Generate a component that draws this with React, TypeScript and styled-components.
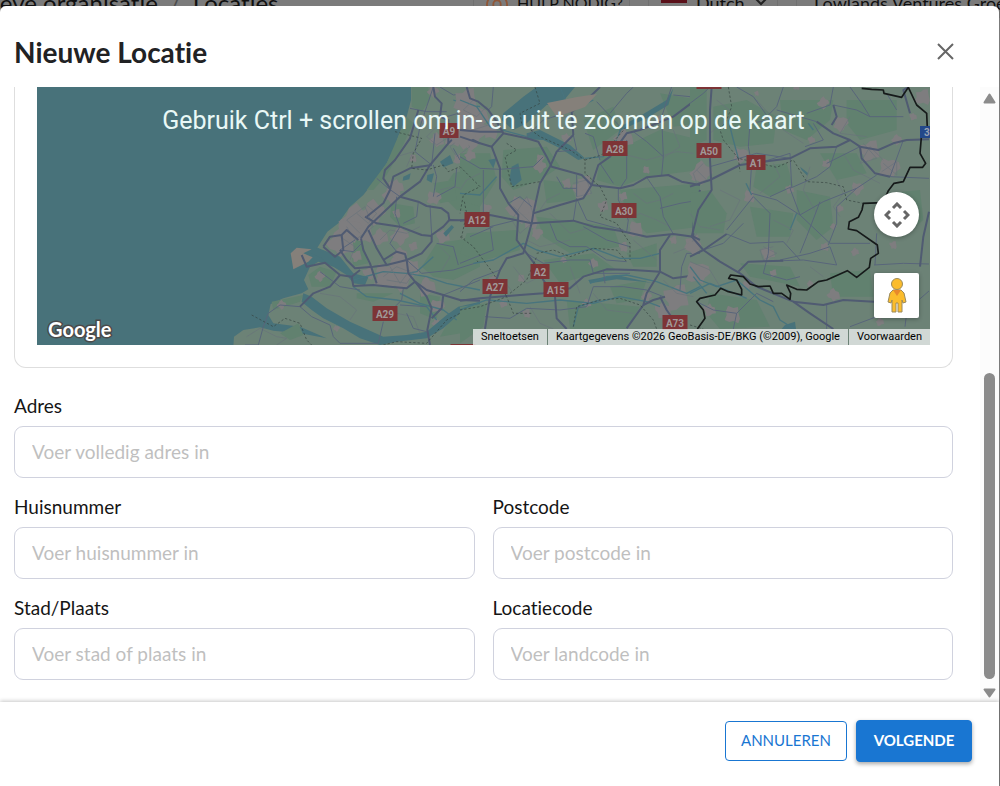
import React, { useId } from "react";
import styled, { createGlobalStyle, css } from "styled-components";

const GlobalStyle = createGlobalStyle`
  *, *::before, *::after { box-sizing: border-box; }
  html, body { margin: 0; background: #7b7b7b; }
  body {
    font-family: Lato, "Liberation Sans", sans-serif;
    font-variant-ligatures: none;
    color: #1a1a1c;
    overflow: hidden;
  }
`;

const Page = styled.div`
  min-height: 100vh;
  display: flex;
  flex-direction: column;
  overflow: hidden;
`;

const TopBar = styled.header`
  display: flex;
  align-items: center;
  gap: 18px;
  height: 30px;
  margin: -12px 0;
  font-size: 18px;
  line-height: 30px;
  white-space: nowrap;
  color: #101010;
`;

const Crumbs = styled.nav`
  display: flex;
  gap: 12px;
  flex: 1;
  margin-left: -6px;
  font-size: 24px;
`;

const Crumb = styled.span<{ $muted?: boolean }>`
  color: ${(p) => (p.$muted ? "#4c4c4c" : "#101010")};
`;

const BarGroup = styled.div<{ $width: number; $small?: boolean }>`
  display: flex;
  align-items: center;
  gap: 9px;
  flex: none;
  width: ${(p) => p.$width}px;
  padding-left: ${(p) => (p.$width > 200 ? 17 : 12)}px;
  font-size: ${(p) => (p.$small ? 16 : 18)}px;
  border: solid #707070;
  border-width: 0 1px;
`;

const Flag = styled.span`
  width: 26px;
  height: 17px;
  margin-bottom: 18px;
  background: linear-gradient(#7a7a7a 50%, #5a1019 50%);
`;

const Dialog = styled.section`
  position: relative;
  flex: 1;
  display: flex;
  flex-direction: column;
  margin-right: 1px;
  background: #fff;
  border-radius: 6px 6px 0 0;
`;

const DialogHeader = styled.div`
  display: flex;
  align-items: center;
  justify-content: space-between;
  height: 81px;
  padding: 10px 40px 0 14px;
`;

const Title = styled.h1`
  margin: 0;
  font-size: 28px;
  line-height: 36px;
  font-weight: 700;
  color: #212224;
`;

const CloseButton = styled.button`
  display: flex;
  padding: 4px;
  border: 0;
  background: none;
  color: #666;
`;

const Body = styled.div`
  flex: 1;
  display: flex;
`;

const Content = styled.form`
  flex: 1;
  min-width: 0;
  padding: 0 27px 20px 14px;
`;

const MapCard = styled.div`
  padding: 0 22px 22px;
  border: 1px solid #dedede;
  border-top: 0;
  border-radius: 0 0 12px 12px;
  margin-bottom: 26px;
`;

const MapBox = styled.div`
  position: relative;
  height: 258px;
  overflow: hidden;
  background: #48727a;
  font-family: Roboto, "Liberation Sans", sans-serif;
`;

const MapDrawing = styled.svg`
  display: block;
  width: 100%;
  height: 100%;
`;

const MapHint = styled.p`
  position: absolute;
  inset: 19px 0 auto;
  margin: 0;
  text-align: center;
  font-size: 25px;
  line-height: 30px;
  color: #e9f8f6;
`;

const MapControls = styled.div`
  position: absolute;
  right: 11px;
  bottom: 27px;
  display: flex;
  flex-direction: column;
  gap: 36px;
`;

const MapButton = styled.button<{ $round?: boolean }>`
  display: grid;
  place-items: center;
  width: 45px;
  height: 45px;
  padding: 0;
  border: 0;
  background: #fff;
  border-radius: ${(p) => (p.$round ? "50%" : "2px")};
  box-shadow: 0 1px 4px rgba(0, 0, 0, 0.3);
`;

const Brand = styled.a`
  position: absolute;
  left: 11px;
  bottom: 3px;
  font-family: Lato, sans-serif;
  font-size: 20px;
  line-height: 26px;
  font-weight: 700;
  color: #fff;
  text-decoration: none;
  -webkit-text-stroke: 3px #4a4a4a;
  paint-order: stroke fill;
`;

const Legal = styled.div`
  position: absolute;
  right: 0;
  bottom: 0;
  display: flex;
  gap: 1px;
  height: 16px;
  font-size: 11px;
  line-height: 16px;
  color: #000;
`;

const legalItem = css`
  padding: 0 8px;
  font: inherit;
  color: inherit;
  border: 0;
  text-decoration: none;
  white-space: nowrap;
  background: rgba(235, 238, 237, 0.8);
`;
const LegalButton = styled.button`${legalItem}`;
const LegalText = styled.span`${legalItem}`;
const LegalLink = styled.a`${legalItem}`;

const Fields = styled.div`
  display: grid;
  grid-template-columns: 1fr 1fr;
  gap: 17px 18px;
`;

const FieldBox = styled.div<{ $wide?: boolean }>`
  display: flex;
  flex-direction: column;
  gap: 8px;
  grid-column: ${(p) => (p.$wide ? "1 / -1" : "auto")};
`;

const Label = styled.label`
  font-size: 19px;
  line-height: 24px;
  color: #151515;
`;

const TextInput = styled.input`
  width: 100%;
  height: 52px;
  padding: 0 17px 2px;
  border: 1px solid #d0d2de;
  border-radius: 9px;
  background: #fff;
  font-family: inherit;
  font-size: 19px;
  color: #151515;
  outline: 0;
  &::placeholder { color: #bfbfbf; opacity: 1; }
`;

const ScrollTrack = styled.div`
  display: flex;
  flex-direction: column;
  align-items: center;
  width: 19px;
  padding: 6px 0 4px;
  background: #fcfcfc;
`;

const ScrollThumb = styled.div`
  flex: 305;
  width: 11px;
  margin-bottom: 9px;
  border-radius: 6px;
  background: #8b8b8b;
`;

const ScrollGap = styled.div`
  flex: 269;
`;

const Footer = styled.footer`
  position: relative;
  display: flex;
  align-items: flex-start;
  justify-content: flex-end;
  gap: 9px;
  height: 84px;
  padding: 18px 27px 0;
  background: #fff;
  box-shadow: 0 -1px 4px rgba(0, 0, 0, 0.22);
`;

const ActionButton = styled.button<{ $primary?: boolean }>`
  height: ${(p) => (p.$primary ? 42 : 40)}px;
  margin-top: ${(p) => (p.$primary ? 0 : 1)}px;
  width: ${(p) => (p.$primary ? 116 : 122)}px;
  padding: 0 0 2px;
  border: 1px solid #1976d2;
  border-radius: 4px;
  background: ${(p) => (p.$primary ? "#1976d2" : "#fff")};
  color: ${(p) => (p.$primary ? "#fff" : "#1976d2")};
  font-family: inherit;
  font-size: 15px;
  font-weight: ${(p) => (p.$primary ? 700 : 400)};
  text-transform: uppercase;
  box-shadow: ${(p) => (p.$primary ? "0 2px 4px rgba(0, 0, 0, 0.35)" : "none")};
`;

/* Each map tile is 240 wide and drawn at three units per pixel. */
type Tile = {
  x: number;
  forest: string[];
  water: string[];
  rivers: string[];
  towns: [number, number, number][];
  major: string[];
  minor: string[];
  lanes: string[];
  trails: string[];
};

const west: Tile = {
  x: 203,
  forest: [
    "515,21 565,21 570,60 545,95 515,80",
    "500,110 520,130 480,215 440,285 400,330 380,330 440,250",
    "640,280 720,260 720,400 650,390 600,340",
    "455,370 520,380 525,430 480,440 450,410",
    "590,490 720,470 720,560 640,600 580,590 545,560",
    "330,480 365,480 385,550 340,560",
    "205,585 240,560 290,575 270,620 215,620",
    "580,310 640,300 650,360 600,370",
    "540,640 600,650 590,720 540,700",
    "640,700 720,680 720,750 600,770",
    "95,665 190,645 180,665 100,690",
    "120,760 175,730 190,765 150,780",
    "350,640 460,640 400,665 350,655",
  ],
  water: [
    "190,640 215,650 260,685 330,725 385,750 430,770 500,765 560,755 620,705 655,680 720,665 720,690 660,700 610,745 560,775 470,785 420,795 360,775 310,745 250,715 215,690 185,665",
    "232,503 300,530 340,580 385,592 375,615 340,610 320,585 280,560 245,535 215,520",
    "600,245 630,225 640,250 610,262",
    "490,290 512,280 508,298 488,302",
    "562,285 582,280 575,308 560,300",
    "610,460 635,435 642,442 618,470",
  ],
  rivers: [
    "340,600 430,575 500,580 560,590 620,610 720,630",
    "340,620 380,650 470,660 560,680 590,720",
    "640,60 680,75 720,80",
    "500,580 530,575 580,530",
    "480,640 540,670 610,690 650,720",
  ],
  towns: [
    [350, 425, 50], [300, 490, 42], [400, 400, 38], [455, 345, 28], [470, 320, 24], [580, 355, 22], [590, 180, 22],
    [325, 455, 40], [375, 460, 30],
    [640, 175, 28], [690, 120, 50], [690, 160, 50], [660, 235, 20], [480, 580, 55], [440, 590, 42], [385, 580, 20], [520, 565, 26],
    [610, 470, 22], [480, 470, 28], [420, 470, 26], [560, 620, 30], [590, 680, 22], [125, 675, 14], [240, 590, 16], [350, 530, 18],
    [580, 35, 18], [520, 235, 13], [480, 525, 22], [520, 500, 15], [290, 745, 10], [590, 730, 15], [470, 400, 14], [550, 120, 10],
  ],
  major: [
    "363,475 385,440 480,350 540,305 570,255 625,190 660,155 720,105",
    "380,410 430,370 450,330 460,290 510,265 575,255",
    "450,325 430,295 435,270 465,240 510,175 535,90",
    "375,410 410,430 480,440 545,465 575,468",
    "385,450 410,505 440,555",
    "363,475 370,510 390,550 410,610",
    "300,510 320,540 345,565 400,560 440,555 500,540 545,520 575,485 575,465 610,440 628,420 720,422",
    "628,420 625,400 605,385 560,378 535,365 480,350",
    "185,525 200,560 255,548 300,585 335,590 360,570",
    "335,590 340,618 400,615 450,620 500,625 525,605 505,580 500,540 495,522 470,515 430,540",
    "525,605 560,650 575,685 562,750 570,795",
    "525,605 560,630 610,645 660,660 720,662",
    "610,645 605,685 575,715",
    "300,585 270,620 220,640 180,680",
    "250,500 270,470 305,465 320,450 355,480",
    "250,500 285,530 310,510 305,465",
    "580,21 585,50 605,70 600,110 625,120 625,190",
    "600,150 660,155 690,175 720,190",
  ],
  minor: [
    "180,680 120,675 85,700 70,740 55,795 15,795",
    "180,680 215,710 270,735 280,770 300,790 415,790 430,725",
    "490,625 485,660 465,680 430,700",
    "580,21 560,80 540,140 525,215 575,255 585,160",
    "510,85 560,95 620,95",
    "410,295 445,325 480,350",
    "470,350 465,400 480,440 450,490 470,515",
    "535,365 530,410 490,430",
    "570,375 575,465",
    "500,540 545,580 640,570 720,545",
    "590,490 640,500 655,555",
    "580,255 590,290 580,350",
    "650,265 645,320 590,350",
    "240,575 300,620 360,630",
    "345,480 300,510 340,515 365,490",
    "680,21 700,50 690,90 620,110",
    "600,21 640,45 680,40",
    "610,645 720,600",
    "640,205 660,240 720,265",
    "480,675 560,680",
    "560,755 520,745 500,700",
  ],
  lanes: [
    "320,440 345,480 400,440 375,380 320,420 360,460",
    "300,470 345,500 330,540",
    "420,480 450,450 500,460 540,440",
    "430,590 470,560 520,580 500,610 440,600",
    "450,560 480,610 510,570",
    "500,260 520,215 470,230 450,260",
    "600,330 640,320 690,330",
    "240,640 300,650 350,690 330,720",
    "20,770 60,745 110,770 140,775 110,795",
    "600,500 630,530 600,580",
    "590,140 560,170 590,195 620,175",
    "650,170 690,200 650,230 630,200 680,160",
    "380,375 410,400 385,430 350,400",
    "470,700 520,710 540,760",
  ],
  trails: [
    "35,705 100,740 135,715 180,730 200,780 215,795",
    "465,155 545,175 520,220 515,265 560,270 610,255 625,275 660,260 720,235",
    "720,345 670,350 680,400 665,470 690,490 715,550",
    "430,795 470,785 560,790 620,720 690,685 720,675",
    "660,265 680,300 720,320",
  ],
};

const middle: Tile = {
  x: 423,
  forest: [
    "130,210 260,200 300,260 240,300 160,330 125,290",
    "420,235 600,150 720,180 720,270 560,290 480,320 410,300",
    "480,330 720,310 720,440 560,460 500,400",
    "0,220 90,220 110,300 60,380 0,360",
    "230,410 460,440 480,500 330,520 250,470",
    "20,460 170,450 180,510 60,545 0,520",
    "250,540 400,520 470,570 370,590 300,610",
    "0,680 80,670 70,740 0,790",
    "250,300 330,310 350,360 260,370",
    "600,40 720,60 720,130 640,140",
    "320,660 540,680 500,747 330,747",
    "450,620 560,600 540,660 470,670",
    "370,120 460,80 480,150 400,210",
    "500,520 590,490 590,560 520,560",
  ],
  water: [
    "130,100 190,50 230,21 345,21 300,75 260,75 200,130 160,150 125,120",
    "200,160 240,150 330,195 375,235 355,240 300,205 250,180 200,178",
    "155,260 175,250 185,300 160,320 148,300",
    "85,240 110,235 100,265",
    "640,25 620,60 545,105 480,140 470,180 485,150 560,115 625,75",
    "385,600 470,585 580,610 550,605 470,598 390,610",
  ],
  rivers: [
    "0,340 60,345 110,290",
    "40,550 100,540 190,490 230,510 300,530 400,505 480,535 540,535 600,520",
    "0,690 80,660 200,670 300,660 400,670 480,650 560,665 600,680",
    "390,610 440,590 500,585 590,605 680,640 720,620",
    "375,235 430,230 470,180",
    "0,60 50,80 90,140 200,170",
    "300,20 330,95 400,60",
    "340,740 355,680 420,660",
  ],
  towns: [
    [20, 60, 40], [30, 120, 52], [10, 170, 36], [30, 225, 18], [90, 150, 28], [185, 385, 44], [210, 420, 28], [230, 460, 18],
    [365, 330, 30], [375, 310, 25], [240, 260, 20], [320, 310, 16], [490, 175, 30], [490, 350, 14], [430, 380, 18], [530, 450, 26],
    [700, 490, 28], [650, 655, 42], [610, 690, 26], [710, 290, 18], [560, 270, 12], [240, 235, 13], [320, 175, 16], [285, 80, 15],
    [80, 385, 14], [185, 595, 13], [100, 600, 14], [400, 550, 15], [310, 540, 10], [560, 650, 16], [490, 500, 16], [640, 480, 13],
    [130, 670, 13], [380, 670, 14], [200, 700, 14], [600, 120, 14],
  ],
  major: [
    "20,21 30,55 55,65 85,90 110,125 130,160 200,175 235,185 260,230 275,260 365,285 395,315 480,325 520,315 560,292 625,285 665,305 720,315",
    "0,170 60,190 95,200 120,265 120,325 145,370 175,405 170,480 200,520 230,560 250,600 285,650 290,715 320,747",
    "340,165 290,215 270,260 240,310 220,400 215,430 190,520 140,535 120,570 90,650 75,747",
    "420,21 370,70 335,95 340,165",
    "0,422 90,405 215,430 340,422 400,440 480,452 560,470 640,462 700,470 720,480",
    "220,400 300,375 370,355 395,315 415,255 450,230 500,160 540,150 640,110 720,50",
    "0,662 60,655 180,645 250,640 330,625 370,590 440,568 520,570 600,575 640,595 690,588",
    "630,465 600,510 600,575 560,640 550,675 500,745",
    "550,675 580,660 615,650",
    "600,650 620,690 660,747",
    "720,330 700,430 700,470",
    "0,150 60,155 130,155",
    "95,200 130,160",
  ],
  minor: [
    "475,325 475,360 505,420 500,455",
    "100,20 95,80 85,90",
    "0,230 60,265 120,268 220,260 250,230",
    "70,270 70,400",
    "145,370 180,350 215,380",
    "350,285 350,350",
    "290,290 310,325 350,325",
    "520,155 560,185 610,230 605,285",
    "635,20 605,110 610,230",
    "640,45 690,50 715,100",
    "450,100 500,40 520,21",
    "410,65 480,140",
    "480,325 500,295 500,180",
    "560,292 600,350 610,410 640,462",
    "720,360 660,370 600,385",
    "270,430 290,480 330,500 380,500 440,540 500,545",
    "370,440 440,480 510,500",
    "340,422 350,355 380,420 490,450",
    "200,520 250,550 330,540 390,540 400,580 510,580",
    "0,550 100,510 90,440 170,420",
    "120,570 40,600 0,635",
    "75,710 150,715 200,685 300,690 380,680 400,620 490,620 560,630 610,650",
    "430,570 435,610",
    "660,630 665,560 680,520 720,520",
    "200,170 250,120 330,95",
    "290,215 350,210 340,165",
    "30,470 100,440",
    "375,160 400,170 420,240",
    "420,250 460,310",
  ],
  lanes: [
    "40,60 10,90 50,110 80,80 100,130 40,150",
    "160,380 215,430 180,460 155,420 200,350 220,400",
    "240,390 260,360 300,340",
    "270,400 330,460 400,440",
    "340,310 380,300 395,340 350,350",
    "520,340 560,370 600,360 640,340",
    "500,420 540,400 590,420 630,440",
    "520,480 590,540",
    "640,520 690,500 720,440",
    "610,600 650,640 700,650",
    "330,560 360,640",
    "400,640 440,690 520,700",
    "160,560 200,610 240,590",
    "130,600 160,640",
    "60,280 20,300 0,330",
    "480,220 560,240 650,215 700,220",
    "640,150 660,200 600,240",
    "200,480 240,500 330,480",
    "270,70 320,70 350,110 280,110",
    "210,680 240,730 280,747",
  ],
  trails: [
    "225,21 240,70 180,100 185,130 240,170 330,210 375,240 375,280 420,320 440,360 420,410 470,430 510,490 510,540",
    "0,260 60,320 10,345 0,400",
    "0,470 40,500 100,580 140,650",
    "230,520 280,510 330,530 400,505 470,510 500,545",
    "140,190 170,210 135,230 155,320 240,305",
    "0,690 60,680 140,650 160,700 215,700",
    "340,740 350,680 420,660 480,655 540,675 580,720 590,747",
    "375,240 425,225 500,140",
    "150,640 200,600 230,530",
  ],
};

const east: Tile = {
  x: 653,
  forest: [
    "0,340 60,330 110,400 100,460 10,460",
    "70,80 170,60 260,110 250,190 150,200 70,180",
    "270,60 430,60 420,120 350,180 280,150",
    "200,260 290,250 310,320 240,350 190,320",
    "320,330 420,350 430,440 380,480 320,420",
    "180,380 310,400 300,470 200,470",
    "470,60 620,60 620,150 510,180 470,130",
    "390,220 500,220 530,280 440,300",
    "60,640 200,660 240,740 90,747 50,700",
    "420,580 540,570 550,650 430,650",
    "590,340 690,330 700,420 640,470",
    "150,550 300,560 330,620 180,590",
    "0,20 50,20 50,180 0,200",
  ],
  water: [
    "285,735 315,725 318,747 275,747",
    "330,260 355,280 352,287 335,270",
  ],
  rivers: [
    "0,560 30,600 80,620 140,600 210,660 250,680 270,720 310,745",
    "115,120 130,180 145,235",
    "168,310 185,345",
    "0,640 60,610 110,630 170,655",
    "320,400 300,450",
    "10,590 50,640",
    "355,130 370,150",
  ],
  towns: [
    [35, 280, 34], [150, 225, 24], [180, 350, 20], [235, 520, 22], [10, 500, 24], [450, 130, 24], [400, 70, 18], [540, 215, 34],
    [595, 265, 32], [620, 180, 16], [500, 325, 20], [410, 250, 14], [300, 328, 14], [450, 385, 12], [405, 500, 14], [495, 515, 13],
    [430, 645, 20], [130, 705, 28], [700, 50, 26], [670, 110, 12], [610, 495, 13], [365, 180, 12], [430, 440, 10], [200, 40, 8],
    [360, 610, 10], [570, 725, 13], [20, 580, 36], [60, 690, 20], [320, 20, 11], [250, 580, 12], [170, 615, 14],
  ],
  major: [
    "65,21 60,90 60,240 65,330 25,390 5,470 40,510 90,545 150,580 200,620 310,665 360,700 430,747",
    "0,320 60,300 150,255 220,245 300,235 360,205 440,200 480,180",
    "380,125 430,160 480,180 510,200 515,235 555,280 600,290",
    "510,200 565,210 610,190 650,180 717,178",
    "145,575 175,545 280,542",
    "0,530 40,510 110,462",
    "310,665 400,675 460,660 552,665",
    "717,395 700,470 690,560",
    "430,75 440,110 425,135",
    "660,100 640,30 655,21",
  ],
  minor: [
    "600,290 717,295",
    "280,542 340,540 440,555 420,500 360,520 270,540",
    "552,555 640,550 717,552",
    "0,70 40,40 60,21",
    "140,21 190,50 240,120 180,130 175,200 185,250 180,330",
    "220,120 260,80 280,21",
    "260,90 380,125",
    "350,100 420,75 430,21",
    "430,75 500,90 540,110 640,110",
    "540,110 515,70 480,21",
    "185,340 260,360 330,405 420,490 540,490",
    "220,245 300,220 305,320 240,350",
    "300,325 380,290 420,260 440,200",
    "300,325 330,405 400,365 500,325 560,285",
    "500,325 440,380 440,430 415,495",
    "110,462 180,490 280,485 330,540",
    "235,520 240,400 190,350 110,450",
    "235,520 220,580 290,600 330,590",
    "40,510 100,490 160,430",
    "20,665 70,690 140,700 200,640 250,665",
    "140,700 130,747",
    "410,675 410,747",
    "480,740 560,710 640,700 717,633",
    "645,740 650,700",
    "555,555 560,460",
    "640,305 660,262",
    "510,200 430,240 410,250",
    "345,200 400,180 370,130",
    "640,180 600,290",
    "300,235 200,220 60,260",
    "390,365 350,470 330,520",
    "590,40 620,90",
  ],
  lanes: [
    "20,270 50,300 20,310 10,280 40,250",
    "80,60 130,100 60,160",
    "200,60 280,150 340,190",
    "90,330 150,360 120,420 60,440",
    "250,420 310,450 290,490",
    "440,300 460,340 430,380 450,410",
    "520,190 560,235 510,250 540,200 580,240",
    "580,250 620,285 620,245 575,275",
    "360,260 340,330 380,400",
    "460,220 490,270 570,310",
    "0,400 30,440 90,450",
    "0,545 60,570 90,620",
    "480,110 450,160 530,170",
    "220,500 260,520 220,540 210,510 250,500",
    "360,560 400,590",
    "250,250 270,290 210,340",
  ],
  trails: [
    "115,21 125,80 110,120 90,150 100,180 145,235 260,262 310,240 350,305 410,308 460,320 470,360 520,370",
    "145,235 150,275",
    "0,735 40,747",
  ],
};

const townShape = (x: number, y: number, r: number) => {
  const points: string[] = [];
  for (let i = 0; i < 12; i++) {
    const k = 0.6 + (((x * 7 + y * 3 + i * 37) % 11) / 11) * 0.6;
    const a = (i / 12) * Math.PI * 2;
    points.push(`${Math.round(x + Math.cos(a) * r * k)},${Math.round(y + Math.sin(a) * r * k)}`);
  }
  return points.join(" ");
};

const lines = (items: string[], stroke: string, width: number, dash?: string) => (
  <g fill="none" stroke={stroke} strokeWidth={width} strokeDasharray={dash} strokeLinejoin="round">
    {items.map((points) => <polyline key={points} points={points} />)}
  </g>
);

const tiles = [west, middle, east];

const shields: [string, number, number][] = [
  ["A9", 412, 44], ["A28", 578, 62], ["A50", 672, 64], ["A1", 719, 76], ["A12", 440, 133], ["A30", 587, 124],
  ["A2", 503, 185], ["A27", 458, 200], ["A15", 519, 203], ["A29", 348, 227], ["A73", 638, 236], ["", 672, -5], ["", 426, 265],
];

const coast =
  "513,0 513,60 500,110 478,160 465,200 440,250 410,295 370,345 330,380 295,430 262,455 232,503 300,545 280,560 235,545 210,560 192,600 205,628 185,640 130,655 92,672 85,705 100,730 180,740 260,775 180,760 100,752 60,742 10,750 -18,770 -20,800 2800,800 2800,0";

const border =
  "515,25 545,28 580,30 582,40 635,52 655,22 680,75 710,100 712,145 695,160 690,220 707,250 698,262 660,262 640,305 612,310 595,332 580,368 520,370 516,390 505,412 478,425 475,447 500,452 562,495 565,520 542,535 538,562 500,592 472,572 410,600 385,605 350,630 320,628 290,615 302,640 300,658 275,640 250,640 240,618 205,620 180,612 160,590 122,585 116,595 140,600 155,628 155,645 115,635 92,625 75,645 30,655 20,665 40,690 45,715 22,747";

function RegionMap() {
  return (
    <MapDrawing viewBox="0 0 893 258" preserveAspectRatio="xMidYMid slice" aria-hidden="true">
      <rect width="893" height="258" fill="#48727a" />
      <g transform="translate(203 -7) scale(0.33333)">
        <polygon points={coast} fill="#6c8276" />
        <polygon points="152,520 170,503 215,508 190,520 218,532 205,545 160,568" fill="#85807a" />
      </g>
      {tiles.map((t) => (
        <g key={t.x} transform={`translate(${t.x} -7) scale(0.33333)`}>
          <g fill="#61816f">{t.forest.map((p) => <polygon key={p} points={p} />)}</g>
          <g fill="#7e7d7f">{t.towns.map(([x, y, r]) => <polygon key={`${x}-${y}`} points={townShape(x, y, r)} />)}</g>
          <g fill="#48727a">{t.water.map((p) => <polygon key={p} points={p} />)}</g>
          {lines(t.rivers, "#48747e", 4)}
          {lines(t.lanes, "#68727a", 2)}
          {lines(t.minor, "#58657a", 3)}
          {lines(t.major, "#505b72", 6)}
          {lines(t.trails, "#35423f", 2, "7 6")}
        </g>
      ))}
      <polygon points="510,16 540,10 560,7 548,20 520,30" fill="#85807a" />
      <g transform="translate(653 -7) scale(0.33333)">
        <polyline points={border} fill="none" stroke="#161a1a" strokeWidth="5" strokeLinejoin="round" />
      </g>
      {shields.map(([name, x, y]) => {
        const w = name.length === 2 ? 19 : 25;
        return (
          <g key={`${x}-${y}`}>
            <rect x={x - w / 2} y={y - 8} width={w} height="15" fill="#7d3436" />
            <text x={x} y={y + 4} textAnchor="middle" fontSize="10" fontWeight="700" fill="#a09898">{name}</text>
          </g>
        );
      })}
      <rect x="883" y="39" width="10" height="12" fill="#23488a" />
      <text x="887" y="49" fontSize="10" fontWeight="700" fill="#9aa3b4">3</text>
    </MapDrawing>
  );
}

function Field({ label, placeholder, wide }: { label: string; placeholder: string; wide?: boolean }) {
  const id = useId();
  return (
    <FieldBox $wide={wide}>
      <Label htmlFor={id}>{label}</Label>
      <TextInput id={id} type="text" placeholder={placeholder} />
    </FieldBox>
  );
}

export default function App() {
  return (
    <Page>
      <GlobalStyle />
      <TopBar>
        <Crumbs>
          <Crumb>ieve organisatie</Crumb>
          <Crumb $muted>/</Crumb>
          <Crumb>Locaties</Crumb>
        </Crumbs>
        <BarGroup $width={157} $small>
          <svg width="22" height="22" viewBox="0 0 24 24" fill="none" stroke="#8f5637" strokeWidth="2" aria-hidden="true">
            <circle cx="12" cy="14" r="11" />
            <path d="M8 18v-5a4 4 0 0 1 8 0v5" />
          </svg>
          HULP NODIG?
        </BarGroup>
        <BarGroup $width={130}>
          <Flag />
          Dutch
          <svg width="14" height="14" viewBox="0 0 14 14" fill="none" stroke="#222" strokeWidth="2" aria-hidden="true">
            <path d="M1 2l6 6 6-6" />
          </svg>
        </BarGroup>
        <BarGroup $width={204}>Lowlands Ventures Groep</BarGroup>
      </TopBar>

      <Dialog role="dialog" aria-labelledby="dialog-title">
        <DialogHeader>
          <Title id="dialog-title">Nieuwe Locatie</Title>
          <CloseButton type="button" aria-label="Sluiten">
            <svg width="19" height="19" viewBox="0 0 19 19" fill="none" stroke="currentColor" strokeWidth="2" aria-hidden="true">
              <path d="M2 2l15 15M17 2L2 17" />
            </svg>
          </CloseButton>
        </DialogHeader>

        <Body>
          <Content>
            <MapCard>
              <MapBox>
                <RegionMap />
                <MapHint>Gebruik Ctrl + scrollen om in- en uit te zoomen op de kaart</MapHint>
                <Brand href="#google">Google</Brand>
                <MapControls>
                  <MapButton type="button" $round aria-label="Kaartbediening">
                    <svg width="26" height="26" viewBox="0 0 26 26" fill="none" stroke="#666" strokeWidth="3" aria-hidden="true">
                      <path d="M9 6l4-4 4 4M9 20l4 4 4-4M6 9l-4 4 4 4M20 9l4 4-4 4" />
                    </svg>
                  </MapButton>
                  <MapButton type="button" aria-label="Street View">
                    <svg width="20" height="35" viewBox="0 0 20 35" aria-hidden="true">
                      <path d="M6 12h8l3 3 2 9-3 1-1-3v12h-4v-9h-2v9H5V22l-1 3-3-1 2-9z" fill="#fbbc2c" stroke="#9a8a5c" />
                      <path d="M6 12h8l-4 6z" fill="#e8892b" />
                      <circle cx="10" cy="6" r="5.5" fill="#fbbc2c" stroke="#9a8a5c" />
                    </svg>
                  </MapButton>
                </MapControls>
                <Legal>
                  <LegalButton type="button">Sneltoetsen</LegalButton>
                  <LegalText>Kaartgegevens ©2026 GeoBasis-DE/BKG (©2009), Google</LegalText>
                  <LegalLink href="#voorwaarden">Voorwaarden</LegalLink>
                </Legal>
              </MapBox>
            </MapCard>

            <Fields>
              <Field wide label="Adres" placeholder="Voer volledig adres in" />
              <Field label="Huisnummer" placeholder="Voer huisnummer in" />
              <Field label="Postcode" placeholder="Voer postcode in" />
              <Field label="Stad/Plaats" placeholder="Voer stad of plaats in" />
              <Field label="Locatiecode" placeholder="Voer landcode in" />
            </Fields>
          </Content>

          <ScrollTrack aria-hidden="true">
            <svg width="13" height="11" viewBox="0 0 13 11" fill="#8b8b8b" stroke="#8b8b8b" strokeWidth="2" strokeLinejoin="round">
              <path d="M6.5 1.5l5 8h-10z" />
            </svg>
            <ScrollGap />
            <ScrollThumb />
            <svg width="13" height="10" viewBox="0 0 13 10" fill="#8b8b8b" stroke="#8b8b8b" strokeWidth="2" strokeLinejoin="round">
              <path d="M1.500 1.500h10l-5 7z" />
            </svg>
          </ScrollTrack>
        </Body>

        <Footer>
          <ActionButton type="button">Annuleren</ActionButton>
          <ActionButton type="button" $primary>Volgende</ActionButton>
        </Footer>
      </Dialog>
    </Page>
  );
}
